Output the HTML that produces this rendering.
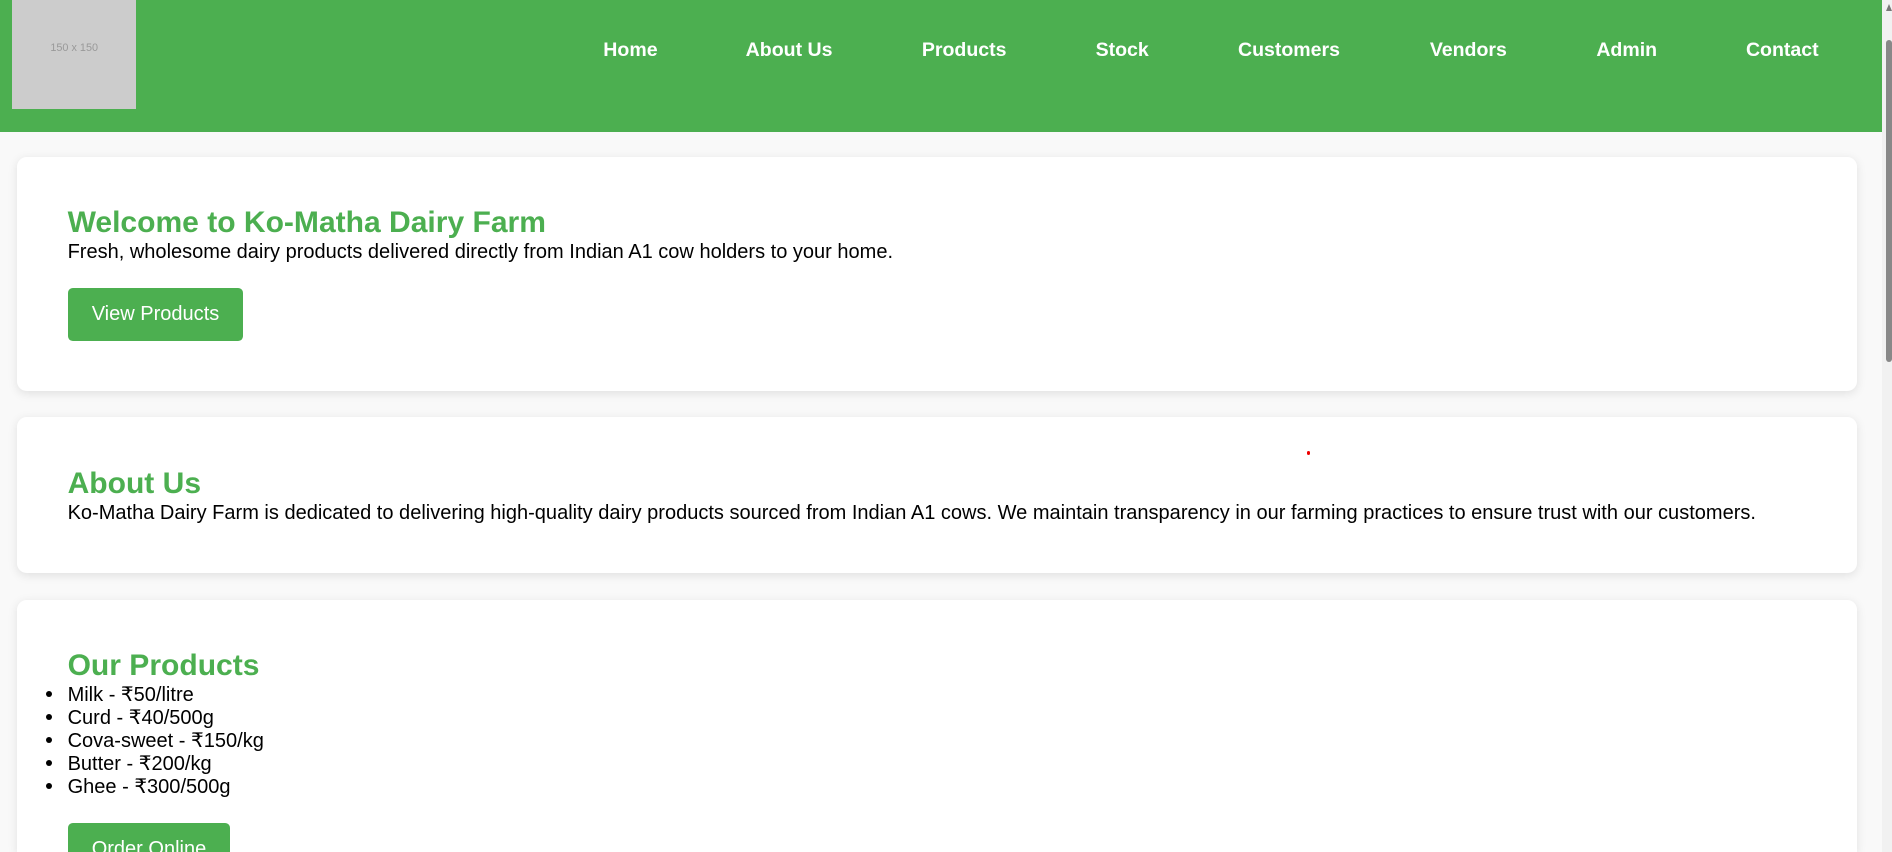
<!DOCTYPE html>
<html><head><meta charset="utf-8">
<style>
html,body{margin:0;padding:0;overflow:hidden}
body{zoom:1.2066;width:1568px;height:706px;background:#f9f9f9;font-family:"Liberation Sans",Arial,sans-serif;position:relative;color:#000;overflow:hidden}
header{position:absolute;left:0;top:0;width:1560px;height:109px;background:#4CAF50}
.logo{position:absolute;left:10px;top:0;width:103px;height:90px;background:#ccc;color:#999;font-size:9px;text-align:center;line-height:80px}
nav a{position:absolute;top:32px;color:#fff;font-weight:bold;font-size:16.2px;text-decoration:none;line-height:19px}
.card{position:absolute;left:14px;width:1525px;background:#fff;border-radius:8px;box-shadow:0 2px 8px rgba(0,0,0,0.1);box-sizing:border-box;padding:41px 42px 41px 42px}
h2{margin:0;color:#4CAF50;font-size:24.9px;line-height:29px}
p{margin:0;font-size:16.6px;line-height:19px}
.btn{display:inline-block;margin-top:20px;background:#4CAF50;color:#fff;font-size:16.6px;height:44px;line-height:44px;padding:0 20px;border-radius:4px}
ul{margin:0;padding-left:0;list-style:none;font-size:16.6px;line-height:19px}
ul li{position:relative}
ul li:before{content:"";position:absolute;left:-18px;top:6px;width:5px;height:5px;border-radius:50%;background:#000}
.sb{position:absolute;left:1560px;top:0;width:8px;height:706px;background:#f1f1f1}
.thumb{position:absolute;left:1563px;top:33px;width:5px;height:267px;background:#888;border-radius:3px}
</style></head><body>
<header>
<div class="logo">150 x 150</div>
<nav>
<a style="left:500px">Home</a>
<a style="left:618px">About Us</a>
<a style="left:764px">Products</a>
<a style="left:908px">Stock</a>
<a style="left:1026px">Customers</a>
<a style="left:1185px">Vendors</a>
<a style="left:1323px">Admin</a>
<a style="left:1447px">Contact</a>
</nav>
</header>
<div class="card" style="top:130px;height:194px">
<h2>Welcome to Ko-Matha Dairy Farm</h2>
<p>Fresh, wholesome dairy products delivered directly from Indian A1 cow holders to your home.</p>
<div class="btn">View Products</div>
</div>
<div class="card" style="top:346px;height:129px">
<h2>About Us</h2>
<p>Ko-Matha Dairy Farm is dedicated to delivering high-quality dairy products sourced from Indian A1 cows. We maintain transparency in our farming practices to ensure trust with our customers.</p>
<div style="position:absolute;left:1069px;top:28px;width:3px;height:3px;border-radius:50%;background:#e00"></div>
</div>
<div class="card" style="top:497px;height:209px;border-radius:8px 8px 0 0">
<h2>Our Products</h2>
<ul>
<li>Milk - ₹50/litre</li>
<li>Curd - ₹40/500g</li>
<li>Cova-sweet - ₹150/kg</li>
<li>Butter - ₹200/kg</li>
<li>Ghee - ₹300/500g</li>
</ul>
<div class="btn">Order Online</div>
</div>
<div class="sb"></div>
<div class="thumb"></div>
<div style="position:absolute;left:1563px;top:3px;width:0;height:0;border-left:3px solid transparent;border-right:3px solid transparent;border-bottom:6px solid #777"></div>
</body></html>
